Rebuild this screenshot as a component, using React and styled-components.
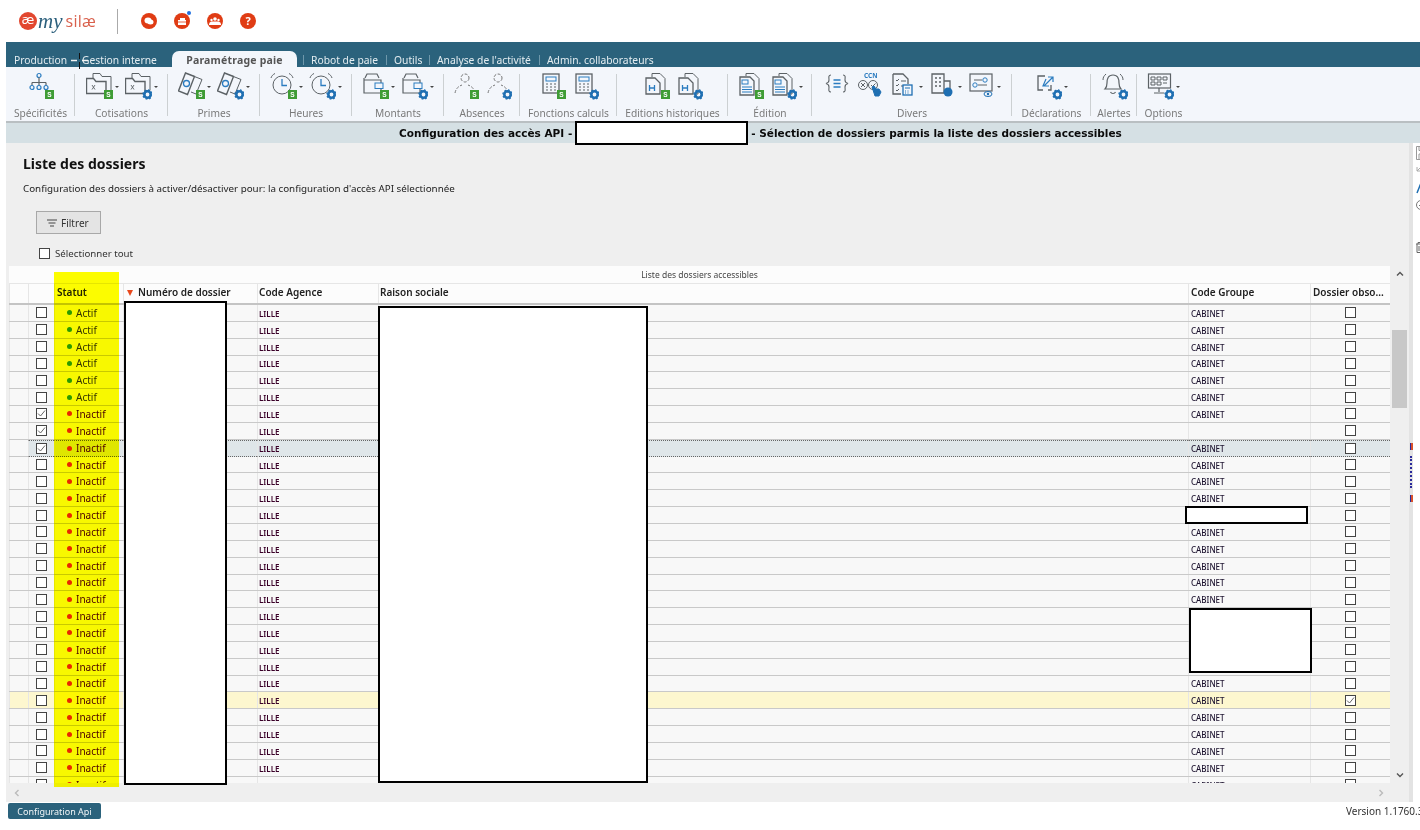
import React from 'react'
import styled, { createGlobalStyle } from 'styled-components'

const GlobalStyle = createGlobalStyle`
  html, body {
    margin: 0;
    padding: 0;
    background: #fff;
    font-family: "Noto Sans", "Liberation Sans", sans-serif;
    overflow: hidden;
  }
`

const Page = styled.div`
  position: relative;
  width: 1420px;
  height: 830px;
  overflow: hidden;
  background: #fff;
`

const TopBar = styled.header`
  height: 42px;
  display: flex;
  align-items: center;
  padding-left: 19px;
  box-sizing: border-box;
`

const Logo = styled.div`
  width: 98px;
  display: flex;
  align-items: center;
`

const LogoMark = styled.span`
  width: 18px;
  height: 18px;
  border-radius: 50%;
  background: #e2472f;
  color: #fff;
  font-size: 13px;
  line-height: 16px;
  text-align: center;
  font-family: "DejaVu Sans", sans-serif;
  margin-right: 1px;
`

const LogoMy = styled.span`
  font-family: "Liberation Serif", serif;
  font-style: italic;
  font-size: 21px;
  line-height: 20px;
  color: #2b5f7c;
  margin-right: 3px;
`

const LogoSilae = styled.span`
  font-family: "Open Sans", sans-serif;
  font-size: 16px;
  line-height: 20px;
  color: #d9604c;
  letter-spacing: 0.3px;
`

const TopDivider = styled.div`
  width: 1px;
  height: 25px;
  background: #aaa;
  margin-right: 23px;
`

const RoundIcons = styled.div`
  display: flex;
  gap: 17px;
`

const RoundIcon = styled.div`
  position: relative;
  width: 16px;
  height: 16px;
  border-radius: 50%;
  background: #e03c14;
  color: #fff;
  font-size: 11px;
  font-weight: 700;
  line-height: 16px;
  text-align: center;
  display: flex;
  align-items: center;
  justify-content: center;
`

const BlueDot = styled.span`
  position: absolute;
  top: -2px;
  right: -1px;
  width: 4px;
  height: 4px;
  border-radius: 50%;
  background: #1f6fe0;
`

const Shell = styled.div`
  margin-left: 6px;
`

const TabBar = styled.nav`
  height: 25px;
  background: #2b627c;
  display: flex;
  align-items: flex-end;
  box-sizing: border-box;
  padding-left: 8px;
  font-size: 10.3px;
  color: #e4edf1;
`

const TabItem = styled.span`
  width: ${p => p.$w}px;
  height: 16px;
  line-height: 18px;
  white-space: nowrap;
  flex: none;
  position: relative;
`

const TabSep = styled.span`
  position: absolute;
  top: 4px;
  left: -8px;
  width: 1px;
  height: 10px;
  background: #6f98ab;
`

const ActiveTab = styled.span`
  width: 125px;
  height: 16px;
  margin: 0 14px 0 0;
  background: #f3f6fb;
  border-radius: 7px 7px 0 0;
  color: #555;
  font-weight: 700;
  font-size: 10.5px;
  letter-spacing: 0.2px;
  line-height: 18px;
  text-align: center;
  flex: none;
`

const Ribbon = styled.div`
  height: 56px;
  background: #f3f6fb;
  border-bottom: 2px solid #b9bfc2;
  box-sizing: border-box;
  display: flex;
`

const RibbonGroup = styled.div`
  width: ${p => p.$w}px;
  flex: none;
  box-sizing: border-box;
  padding-top: 5px;
  display: flex;
  flex-direction: column;
  align-items: center;
  position: relative;
  &:not(:last-child)::after {
    content: '';
    position: absolute;
    right: 0;
    top: 7px;
    height: 42px;
    width: 1px;
    background: #ccd0d2;
  }
`

const RibbonItems = styled.div`
  height: 30px;
  display: flex;
  align-items: flex-start;
  gap: 6px;
`

const RibbonItem = styled.div`
  display: flex;
  align-items: center;
  gap: 2px;
`

const Caret = styled.span`
  width: 0;
  height: 0;
  border-left: 2px solid transparent;
  border-right: 2px solid transparent;
  border-top: 2.5px solid #444;
  margin-top: 2px;
`

const RibbonLabel = styled.div`
  margin-top: 4px;
  font-size: 10.2px;
  line-height: 14px;
  color: #7a7a7a;
  white-space: nowrap;
`

const TitleBar = styled.div`
  height: 20px;
  background: #d5e0e4;
  display: flex;
  align-items: center;
  padding-left: 393px;
  font-family: "DejaVu Sans", sans-serif;
  font-weight: 700;
  font-size: 10.5px;
  color: #0a0a0a;
  white-space: nowrap;
`

const TitleMask = styled.span`
  position: relative;
  z-index: 1;
  width: 173px;
  height: 24px;
  flex: none;
  box-sizing: border-box;
  border: 2px solid #000;
  background: #fff;
  margin: 0 3px 0 3px;
`

const Body = styled.div`
  height: 659px;
  display: flex;
`

const Workspace = styled.main`
  width: 1403px;
  flex: none;
  background: #efefef;
  display: flex;
  flex-direction: column;
`

const Intro = styled.div`
  height: 123px;
  box-sizing: border-box;
  padding: 13px 0 0 17px;
`

const Heading = styled.h1`
  margin: 0;
  font-size: 14px;
  line-height: 16px;
  font-weight: 700;
  color: #111;
`

const Description = styled.p`
  margin: 10px 0 0;
  font-size: 9.8px;
  line-height: 14px;
  color: #222;
`

const FilterButton = styled.button`
  display: flex;
  align-items: center;
  gap: 4px;
  width: 65px;
  height: 23px;
  margin: 15px 0 0 13px;
  padding: 0 0 0 10px;
  background: #e4e4e4;
  border: 1px solid #a8a8a8;
  font: inherit;
  font-size: 10px;
  color: #333;
`

const SelectAll = styled.label`
  display: flex;
  align-items: center;
  gap: 5px;
  margin: 13px 0 0 16px;
  font-size: 9.7px;
  color: #333;
`

const Box = styled.span`
  width: 11px;
  height: 11px;
  flex: none;
  box-sizing: border-box;
  border: 1px solid #444;
  background: #fff;
  display: flex;
  align-items: center;
  justify-content: center;
`

const TableFrame = styled.div`
  margin-left: 3px;
  height: 517px;
  display: flex;
`

const Table = styled.div`
  width: 1381px;
  flex: none;
  background: #fcfcfc;
`

const Caption = styled.div`
  height: 17px;
  line-height: 18px;
  font-size: 8.5px;
  text-align: center;
  color: #444;
`

const columns = '19px 26px 69px 134px 121px 810px 122px 80px'

const HeaderRow = styled.div`
  display: grid;
  grid-template-columns: ${columns};
  height: 22px;
  box-sizing: border-box;
  border-top: 1px solid #e6e6e6;
  border-bottom: 2px solid #c4c4c4;
  font-size: 10px;
  font-weight: 600;
  color: #222;
`

const HeaderCell = styled.div`
  display: flex;
  align-items: center;
  padding: 0 0 3px ${p => p.$pad ?? 2}px;
  border-left: 1px solid #e6e6e6;
  white-space: nowrap;
  overflow: hidden;
`

const SortArrow = styled.span`
  width: 0;
  height: 0;
  border-left: 3px solid transparent;
  border-right: 3px solid transparent;
  border-top: 6px solid #e8481c;
  margin: 2px 5px 0 0;
`

const Rows = styled.div`
  height: 478px;
  overflow: hidden;
`

const Row = styled.div`
  display: grid;
  grid-template-columns: ${columns};
  height: 16.85px;
  box-sizing: border-box;
  background: ${p => (p.$obsolete ? '#fdf7cf' : '#f8f8f8')};
  border-bottom: 1px solid #c9c9c9;
`

const Cell = styled.div`
  display: flex;
  align-items: center;
  justify-content: ${p => (p.$center ? 'center' : 'flex-start')};
  padding: ${p => p.$top ?? 0}px 0 0 ${p => p.$pad ?? 2}px;
  box-sizing: border-box;
  border-left: 1px solid #e6e6e6;
  font-size: ${p => p.$size ?? 8}px;
  font-weight: ${p => p.$weight ?? 400};
  color: ${p => p.$color ?? '#222'};
  white-space: nowrap;
  overflow: hidden;
  ${p =>
    p.$selected &&
    `
      background: #dfe6e9;
      border-top: 1px dotted #666;
      margin-bottom: -1px;
      border-bottom: 1px dotted #666;
    `}
`

const StatusDot = styled.span`
  width: 5px;
  height: 5px;
  border-radius: 50%;
  margin-right: 4px;
  background: ${p => (p.$active ? '#2a9a22' : '#e8281c')};
`

const VScroll = styled.div`
  width: 19px;
  flex: none;
  display: flex;
  flex-direction: column;
  align-items: center;
  padding-top: 4px;
  box-sizing: border-box;
  height: 517px;
  color: #555;
`

const Thumb = styled.div`
  width: 15px;
  height: 78px;
  margin-top: 52px;
  background: #c8c8c8;
`

const DownArrow = styled.div`
  margin-top: auto;
  margin-bottom: 4px;
  line-height: 0;
`

const HScroll = styled.div`
  height: 19px;
  display: flex;
  align-items: center;
  justify-content: space-between;
  padding: 0 24px 0 7px;
  color: #bbb;
  line-height: 0;
`

const Rail = styled.aside`
  flex: 1;
  position: relative;
  border-left: 4px solid #e3e3e3;
  padding: 3px 0 0 3px;
  display: flex;
  flex-direction: column;
  color: #777;
`

const RailIcon = styled.div`
  height: ${p => p.$h}px;
  line-height: 0;
  flex: none;
`

const RailDots = styled.div`
  position: absolute;
  left: -3px;
  top: 313px;
  height: 32px;
  border-left: 2px dotted #2a2a9a;
`

const RailMark = styled.div`
  position: absolute;
  left: -3px;
  top: ${p => p.$y}px;
  width: 1px;
  height: 7px;
  background: #2a2a9a;
  border-right: 2px solid #d8502a;
`

const Footer = styled.footer`
  height: 28px;
  display: flex;
  justify-content: space-between;
  padding: 1px 0 0 2px;
  box-sizing: border-box;
`

const StatusTab = styled.div`
  width: 93px;
  height: 16px;
  background: #2b627c;
  border-radius: 2px;
  color: #f2f6f8;
  font-size: 9px;
  line-height: 17px;
  text-align: center;
`

const Version = styled.div`
  width: 74px;
  overflow: hidden;
  white-space: nowrap;
  font-size: 10px;
  line-height: 15px;
  margin-top: 1px;
  color: #333;
`

const Highlight = styled.div`
  position: absolute;
  left: 54px;
  top: 272px;
  width: 65px;
  height: 515px;
  background: #ffff00;
  mix-blend-mode: multiply;
  pointer-events: none;
`

const Redaction = styled.div`
  position: absolute;
  left: ${p => p.$x}px;
  top: ${p => p.$y}px;
  width: ${p => p.$w}px;
  height: ${p => p.$h}px;
  box-sizing: border-box;
  border: 2px solid #000;
  background: #fff;
`

const Cursor = styled.svg`
  position: absolute;
  left: 71px;
  top: 52px;
`

const stroke = { fill: 'none', stroke: '#5c6266', strokeWidth: 1 }
const blue = { fill: 'none', stroke: '#2b7cc0', strokeWidth: 1.2 }

const glyphs = {
  org: (
    <g {...blue}>
      <circle cx='12' cy='3.5' r='2' />
      <path d='M12 5.5v5M5 10.5h14M5 10.5v3M12 10.5v3M19 10.5v3' stroke='#5c6266' />
      <circle cx='5' cy='15.5' r='2' />
      <circle cx='12' cy='15.5' r='2' />
      <circle cx='19' cy='15.5' r='2' />
    </g>
  ),
  folder: (
    <g {...stroke}>
      <path d='M7 6V1.5h7l2 3h9v14h-5' />
      <path d='M.5 21.5V6.5h7l2.5 3h10v12z' strokeWidth='1.4' />
      <path d='M6 13l3 4.5M6 17.5l3-4.5' strokeWidth='.9' />
    </g>
  ),
  cash: (
    <g {...stroke}>
      <path d='M12 3l7 2.5 5 2-6 14.5-5-2' />
      <path d='M7.5 1l9 3.5-7 18-9-3.5z' strokeWidth='1.4' fill='#f3f6fb' />
      <circle cx='8.5' cy='11.5' r='3' stroke='#2b7cc0' strokeWidth='1.3' />
    </g>
  ),
  clock: (
    <g {...stroke}>
      <circle cx='12' cy='13' r='9' />
      <path d='M12 7v6.5h5' stroke='#2b7cc0' strokeWidth='1.3' />
      <path d='M1 6c.5-2 2-3.5 4-4.5M23 6c-.5-2-2-3.5-4-4.5' />
    </g>
  ),
  wallet: (
    <g {...stroke}>
      <path d='M2 6V21h17v-4M2 8h17v3M3 6l2-4h10l2 4' strokeWidth='1.2' />
      <rect x='13' y='11' width='8' height='5.5' stroke='#2b7cc0' />
    </g>
  ),
  person: (
    <g fill='none' stroke='#777' strokeWidth='1' strokeDasharray='3 1.5'>
      <circle cx='13' cy='6' r='4' />
      <path d='M3 21c1-5 4-7 7-8M23 21c-1-5-4-7-7-8' />
    </g>
  ),
  calc: (
    <g {...stroke}>
      <rect x='4' y='2' width='16' height='19' strokeWidth='1.3' />
      <rect x='7' y='5' width='10' height='4' stroke='#2b7cc0' />
      <path d='M7 12h2M11 12h2M15 12h2M7 15h2M11 15h2M15 15h2M7 18h2M11 18h2M15 18h2' strokeWidth='1.2' />
    </g>
  ),
  docH: (
    <g {...stroke}>
      <path d='M9 5V1.5h8l5 5V22h-3' />
      <path d='M3 6h9l5 5v11H3z' strokeWidth='1.3' />
      <path d='M6.5 13v6M11.5 13v6M6.5 16h5' stroke='#2b7cc0' strokeWidth='1.3' />
    </g>
  ),
  report: (
    <g {...stroke}>
      <path d='M9 4V1.5h8l5 5V22h-4' />
      <path d='M3 5h10l4 4v14H3z' strokeWidth='1.3' />
      <rect x='5' y='8' width='6' height='4' stroke='#2b7cc0' />
      <path d='M5 15h10M5 17.5h10M5 20h10' stroke='#2b7cc0' strokeWidth='1.2' />
    </g>
  ),
  braces: (
    <g {...stroke} strokeWidth='1.1'>
      <path d='M7 3c-3 0-2 3-2 5s-1 3-3 3.5c2 .5 3 1.5 3 3.5s-1 5 2 5M19 3c3 0 2 3 2 5s1 3 3 3.5c-2 .5-3 1.5-3 3.5s1 5-2 5' />
      <path d='M9.5 8h7M9.5 11.5h7M9.5 15h7' stroke='#2b7cc0' strokeWidth='1.3' />
    </g>
  ),
  ccn: (
    <g {...stroke}>
      <text x='7' y='6' fontSize='6.5' fontWeight='700' fill='#2b7cc0' stroke='none'>CCN</text>
      <circle cx='6' cy='13' r='4.5' />
      <path d='M4 11l4 4M8 11l-4 4' />
      <circle cx='16' cy='13' r='4.5' />
      <path d='M14 13l1.5 1.5 3-3' />
      <path d='M15 15l2-1 2 3h3l2 3-2 4h-4z' fill='#1f6fb2' stroke='#1f6fb2' />
    </g>
  ),
  checklist: (
    <g {...stroke}>
      <path d='M3 2h10l5 5v5M3 2v20h8' strokeWidth='1.3' />
      <path d='M6 8l1 1 2-2M6 13l1 1 2-2M6 18l1 1 2-2M11 9h5M11 14h2' />
      <rect x='13' y='13' width='9' height='10' fill='#f3f6fb' stroke='#1f6fb2' strokeWidth='1.3' />
      <path d='M15 16h5M15 19h1M17.5 19h1M15 21h1M17.5 21h1' stroke='#1f6fb2' />
    </g>
  ),
  building: (
    <g {...stroke}>
      <path d='M3 21V2h12v19zM15 9h6v9' strokeWidth='1.3' />
      <path d='M6 6h2M10 6h2M6 10h2M10 10h2M6 14h2M10 14h2' strokeWidth='1.4' />
      <circle cx='19' cy='20' r='4.5' fill='#1f6fb2' stroke='none' />
    </g>
  ),
  toggles: (
    <g {...stroke}>
      <rect x='2' y='2' width='22' height='17' strokeWidth='1.2' />
      <path d='M6 8h8M10 13h9' />
      <circle cx='17' cy='8' r='2.2' stroke='#2b7cc0' />
      <circle cx='7' cy='13' r='2.2' stroke='#2b7cc0' />
      <ellipse cx='20' cy='22' rx='4' ry='2.5' fill='#f3f6fb' stroke='#1f6fb2' />
      <circle cx='20' cy='22' r='1.2' fill='#1f6fb2' stroke='none' />
    </g>
  ),
  arrows: (
    <g {...stroke}>
      <path d='M10 4H3v14h5M16 13v5h-3' strokeWidth='1.3' />
      <path d='M9 14l9-9M13 5h5v5M11 7l-3 7h6' stroke='#2b7cc0' strokeWidth='1.2' />
    </g>
  ),
  bell: (
    <g {...stroke}>
      <path d='M12 3c-5 0-6 4-6 8s-2 6-2 6h16s-2-2-2-6-1-8-6-8zM9.5 20c1 2 4 2 5 0' strokeWidth='1.2' />
      <path d='M2 8c0-3 1-4 3-6M22 8c0-3-1-4-3-6' />
    </g>
  ),
  monitor: (
    <g {...stroke}>
      <rect x='1.5' y='2' width='22' height='14' strokeWidth='1.2' />
      <path d='M12 16v4M7 21h10' strokeWidth='1.2' />
      <path d='M4 5h4v3H4zM10 5h4v3h-4zM16 5h4v3h-4zM4 10h4v3H4zM10 10h4v3h-4zM16 11h4' />
    </g>
  )
}

function RibbonGlyph({ name, badge }) {
  return (
    <svg width='27' height='28' viewBox='0 0 27 28'>
      {glyphs[name]}
      {badge === 's' && (
        <g>
          <rect x='18' y='18' width='9' height='9' fill='#3f9c35' />
          <text x='22.5' y='25' fontSize='6.5' fontWeight='700' fill='#fff' textAnchor='middle' fontFamily='Liberation Sans'>S</text>
        </g>
      )}
      {badge === 'g' && (
        <g>
          <circle cx='22.5' cy='22.5' r='3.2' fill='none' stroke='#1f6fb2' strokeWidth='2.6' />
          <circle cx='22.5' cy='22.5' r='4.6' fill='none' stroke='#1f6fb2' strokeWidth='1.3' strokeDasharray='1.8 1.8' />
        </g>
      )}
    </svg>
  )
}

const ribbonGroups = [
  { label: 'Spécificités', w: 69, items: [['org', 's']] },
  { label: 'Cotisations', w: 93, items: [['folder', 's', 1], ['folder', 'g', 1]] },
  { label: 'Primes', w: 92, items: [['cash', 's', 1], ['cash', 'g', 1]] },
  { label: 'Heures', w: 92, items: [['clock', 's', 1], ['clock', 'g', 1]] },
  { label: 'Montants', w: 92, items: [['wallet', 's', 1], ['wallet', 'g', 1]] },
  { label: 'Absences', w: 76, items: [['person', 's'], ['person', 'g']] },
  { label: 'Fonctions calculs', w: 97, items: [['calc', 's'], ['calc', 'g']] },
  { label: 'Editions historiques', w: 111, items: [['docH', 's'], ['docH', 'g']] },
  { label: 'Édition', w: 84, items: [['report', 's'], ['report', 'g', 1]] },
  { label: 'Divers', w: 200, items: [['braces'], ['ccn'], ['checklist', null, 1], ['building', null, 1], ['toggles', null, 1]] },
  { label: 'Déclarations', w: 79, items: [['arrows', 'g', 1]] },
  { label: 'Alertes', w: 46, items: [['bell', 'g']] },
  { label: 'Options', w: 53, items: [['monitor', 'g', 1]] }
]

const navTabs = [
  { label: 'Production', w: 68 },
  { label: 'Gestion interne', w: 90 },
  { active: true },
  { label: 'Robot de paie', w: 83, sep: true },
  { label: 'Outils', w: 43, sep: true },
  { label: "Analyse de l'activité", w: 110, sep: true },
  { label: 'Admin. collaborateurs', w: 120, sep: true }
]

const rows = Array.from({ length: 29 }, (_, i) => ({
  active: i < 6,
  checked: i >= 6 && i <= 8,
  selected: i === 8,
  group: i === 7 ? '' : 'CABINET',
  obsolete: i === 23
}))

const Tick = () => (
  <svg width='9' height='9' viewBox='0 0 9 9'>
    <path d='M1 4.5l2.5 2.5L8 1.5' fill='none' stroke='#666' strokeWidth='1' />
  </svg>
)

const Checkbox = ({ checked }) => <Box>{checked && <Tick />}</Box>

const Chevron = ({ d }) => (
  <svg width='8' height='8' viewBox='0 0 8 8'>
    <path d={d} fill='none' stroke='currentColor' strokeWidth='1.4' />
  </svg>
)

export default function App() {
  return (
    <Page>
      <GlobalStyle />
      <TopBar>
        <Logo>
          <LogoMark>æ</LogoMark>
          <LogoMy>my</LogoMy>
          <LogoSilae>silæ</LogoSilae>
        </Logo>
        <TopDivider />
        <RoundIcons>
          <RoundIcon>
            <svg width='10' height='9' viewBox='0 0 10 9'>
              <ellipse cx='4' cy='3.5' rx='3.5' ry='3' fill='#fff' />
              <ellipse cx='6.5' cy='5' rx='3' ry='2.5' fill='#fff' />
            </svg>
          </RoundIcon>
          <RoundIcon>
            <svg width='10' height='9' viewBox='0 0 10 9'>
              <path d='M1 3h8v5H1zM3 1h5v2H3z' fill='#fff' />
              <path d='M1 5h8' stroke='#e03c14' strokeWidth='.8' />
            </svg>
            <BlueDot />
          </RoundIcon>
          <RoundIcon>
            <svg width='12' height='9' viewBox='0 0 12 9'>
              <circle cx='6' cy='2' r='1.8' fill='#fff' />
              <circle cx='2.5' cy='3' r='1.2' fill='#fff' />
              <circle cx='9.5' cy='3' r='1.2' fill='#fff' />
              <path d='M0 8c0-3 2-3.5 3-3.5h6c1 0 3 .5 3 3.5z' fill='#fff' />
            </svg>
          </RoundIcon>
          <RoundIcon>?</RoundIcon>
        </RoundIcons>
      </TopBar>

      <Shell>
        <TabBar>
          {navTabs.map((tab, i) =>
            tab.active ? (
              <ActiveTab key={i}>Paramétrage paie</ActiveTab>
            ) : (
              <TabItem key={i} $w={tab.w}>
                {tab.sep && <TabSep />}
                {tab.label}
              </TabItem>
            )
          )}
        </TabBar>

        <Ribbon>
          {ribbonGroups.map(group => (
            <RibbonGroup key={group.label} $w={group.w}>
              <RibbonItems>
                {group.items.map(([name, badge, caret], i) => (
                  <RibbonItem key={i}>
                    <RibbonGlyph name={name} badge={badge} />
                    {caret && <Caret />}
                  </RibbonItem>
                ))}
              </RibbonItems>
              <RibbonLabel>{group.label}</RibbonLabel>
            </RibbonGroup>
          ))}
        </Ribbon>

        <TitleBar>
          Configuration des accès API -
          <TitleMask />
          - Sélection de dossiers parmis la liste des dossiers accessibles
        </TitleBar>

        <Body>
          <Workspace>
            <Intro>
              <Heading>Liste des dossiers</Heading>
              <Description>Configuration des dossiers à activer/désactiver pour: la configuration d'accès API sélectionnée</Description>
              <FilterButton>
                <svg width='10' height='8' viewBox='0 0 10 8'>
                  <path d='M0 1h10M1.5 4h7M3 7h4' stroke='#444' strokeWidth='1' />
                </svg>
                Filtrer
              </FilterButton>
              <SelectAll>
                <Checkbox />
                Sélectionner tout
              </SelectAll>
            </Intro>

            <TableFrame>
              <Table>
                <Caption>Liste des dossiers accessibles</Caption>
                <HeaderRow>
                  <HeaderCell />
                  <HeaderCell />
                  <HeaderCell>Statut</HeaderCell>
                  <HeaderCell $pad={3}><SortArrow />Numéro de dossier</HeaderCell>
                  <HeaderCell $pad={1}>Code Agence</HeaderCell>
                  <HeaderCell $pad={1}>Raison sociale</HeaderCell>
                  <HeaderCell>Code Groupe</HeaderCell>
                  <HeaderCell>Dossier obso…</HeaderCell>
                </HeaderRow>
                <Rows>
                  {rows.map((row, i) => (
                    <Row key={i} $obsolete={row.obsolete}>
                      <Cell />
                      <Cell $center $pad={0} $selected={row.selected}><Checkbox checked={row.checked} /></Cell>
                      <Cell $pad={12} $size={10} $color={row.active ? '#333300' : '#4a0000'} $selected={row.selected}>
                        <StatusDot $active={row.active} />
                        {row.active ? 'Actif' : 'Inactif'}
                      </Cell>
                      <Cell $selected={row.selected} />
                      <Cell $pad={1} $top={1} $weight={600} $color='#3a0028' $selected={row.selected}>LILLE</Cell>
                      <Cell $selected={row.selected} />
                      <Cell $top={1} $weight={500} $color='#1e1430' $selected={row.selected}>{row.group}</Cell>
                      <Cell $center $pad={0} $selected={row.selected}><Checkbox checked={row.obsolete} /></Cell>
                    </Row>
                  ))}
                </Rows>
              </Table>
              <VScroll>
                <Chevron d='M1 5.5l3-3 3 3' />
                <Thumb />
                <DownArrow><Chevron d='M1 2.5l3 3 3-3' /></DownArrow>
              </VScroll>
            </TableFrame>

            <HScroll>
              <Chevron d='M5.5 1l-3 3 3 3' />
              <Chevron d='M2.5 1l3 3-3 3' />
            </HScroll>
          </Workspace>

          <Rail>
            <RailIcon $h={20}>
              <svg width='12' height='14' viewBox='0 0 12 14'>
                <path d='M.5.5h10v13H.5zM3 .5v4h5v-4M3 13V8h6v5' fill='none' stroke='#999' />
              </svg>
            </RailIcon>
            <RailIcon $h={16}>
              <svg width='8' height='6' viewBox='0 0 8 6'>
                <path d='M1 1v4h4M1 5l4-4' fill='none' stroke='#aaa' />
              </svg>
            </RailIcon>
            <RailIcon $h={18}>
              <svg width='8' height='12' viewBox='0 0 8 12'>
                <path d='M1 11L5 1h2v10' fill='none' stroke='#1f6fb2' strokeWidth='1.5' />
              </svg>
            </RailIcon>
            <RailIcon $h={42}>
              <svg width='10' height='10' viewBox='0 0 10 10'>
                <circle cx='5' cy='5' r='4.5' fill='none' stroke='#777' />
                <path d='M3 5l1.5 1.5L7 3.5' fill='none' stroke='#777' />
              </svg>
            </RailIcon>
            <RailIcon $h={14}>
              <svg width='8' height='11' viewBox='0 0 8 11'>
                <path d='M0 2h8M2 2V.5h4V2M1 2v8.5h6V2M3 4v5M5 4v5' fill='none' stroke='#666' />
              </svg>
            </RailIcon>
            <RailMark $y={300} />
            <RailDots />
            <RailMark $y={352} />
          </Rail>
        </Body>

        <Footer>
          <StatusTab>Configuration Api</StatusTab>
          <Version>Version 1.1760.3</Version>
        </Footer>
      </Shell>

      <Highlight />
      <Redaction $x={124} $y={301} $w={103} $h={484} />
      <Redaction $x={378} $y={306} $w={270} $h={477} />
      <Redaction $x={1185} $y={506} $w={123} $h={18} />
      <Redaction $x={1189} $y={608} $w={123} $h={65} />

      <Cursor width='18' height='18' viewBox='0 0 18 18'>
        <path d='M0 8.5h6M11 8.5h6' fill='none' stroke='#f4f4f4' strokeWidth='1.4' />
        <path d='M8.5 1v6M8.5 10v7' fill='none' stroke='#111' strokeWidth='1' />
      </Cursor>
    </Page>
  )
}
